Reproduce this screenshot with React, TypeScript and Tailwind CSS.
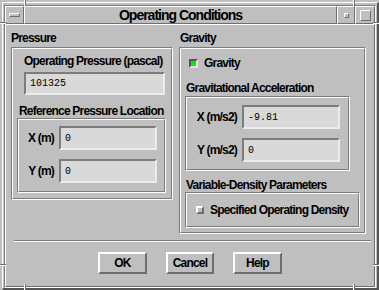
import type { ReactNode } from 'react'

const label = "font-bold text-[12px] leading-[14px] tracking-[-0.8px] text-black"
const mono = "font-['Liberation_Mono','DejaVu_Sans_Mono',monospace] text-[10px] text-black"

function Etched({ className, children }: { className: string; children?: ReactNode }) {
  return (
    <div className={`border border-t-[#7c7c7c] border-l-[#7c7c7c] border-b-white border-r-white ${className}`}>
      <div className="h-full border border-t-white border-l-white border-b-[#7c7c7c] border-r-[#7c7c7c]">
        {children}
      </div>
    </div>
  )
}

function Field({ value, className }: { value: string; className: string }) {
  return (
    <div
      className={`flex items-center pl-[4px] bg-[#d9d9d9] border-2 border-t-[#7c7c7c] border-l-[#7c7c7c] border-b-[#ececec] border-r-[#ececec] ${mono} ${className}`}
    >
      {value}
    </div>
  )
}

function FieldRow({ name, value, labelW }: { name: string; value: string; labelW: string }) {
  return (
    <div className="flex items-center gap-[5px]">
      <span className={`${label} ${labelW} text-right`}>{name}</span>
      <Field value={value} className="w-[98px] h-[24px]" />
    </div>
  )
}

function Button({ text, w }: { text: string; w: string }) {
  return (
    <div
      className={`${w} h-[22px] flex items-center justify-center border-2 border-t-white border-l-white border-b-[#6e6e6e] border-r-[#6e6e6e] ${label}`}
    >
      {text}
    </div>
  )
}

function Notch({ className }: { className: string }) {
  return <div className={`absolute ${className}`} />
}

export default function App() {
  return (
    <div className="relative w-[379px] h-[290px] bg-[#bfbfbf] pl-[2px] pt-[2px] overflow-hidden font-['Liberation_Sans',Arial,sans-serif]">
      <div className="w-[377px] h-[288px] border-t border-l border-white border-r-2 border-b-2 border-r-[#555555] border-b-[#555555] p-[1px]">
        <div className="w-full h-full m-[1px] -ml-0 border border-t-[#7c7c7c] border-l-[#7c7c7c] border-b-white border-r-white flex flex-col">
          {/* title bar */}
          <div className="flex h-[18px] shrink-0">
            <div className="w-[19px] h-full flex items-center justify-center border border-t-white border-l-white border-b-[#6e6e6e] border-r-[#6e6e6e]">
              <div className="w-[11px] h-[4px] border border-t-white border-l-white border-b-[#6e6e6e] border-r-[#6e6e6e]" />
            </div>
            <div className="flex-1 h-full flex items-center justify-center border border-t-white border-l-white border-b-[#6e6e6e] border-r-[#6e6e6e]">
              <span className="font-bold text-[14px] leading-[16px] tracking-[-1px] text-black">Operating Conditions</span>
            </div>
            <div className="w-[18px] h-full flex items-center justify-center border border-t-white border-l-white border-b-[#6e6e6e] border-r-[#6e6e6e]">
              <div className="w-[5px] h-[5px] border border-t-white border-l-white border-b-[#6e6e6e] border-r-[#6e6e6e]" />
            </div>
            <div className="w-[20px] h-full flex items-center justify-center border border-t-white border-l-white border-b-[#6e6e6e] border-r-[#6e6e6e]">
              <div className="w-[11px] h-[11px] border border-t-white border-l-white border-b-[#6e6e6e] border-r-[#6e6e6e]" />
            </div>
          </div>

          {/* dialog body */}
          <div className="flex-1 flex flex-col border border-t-white border-l-white border-b-[#6e6e6e] border-r-[#6e6e6e] pt-[6px] px-[4px]">
            <div className="flex gap-[6px] items-start">
              {/* Pressure */}
              <div className="w-[162px] ml-[1px]">
                <div className={`${label} mb-[2px]`}>Pressure</div>
                <Etched className="w-[162px] h-[153px]">
                  <div className="pt-[5px]">
                    <div className={`${label} ml-[11px]`}>Operating Pressure (pascal)</div>
                    <Field value="101325" className="ml-[11px] mt-[4px] w-[141px] h-[23px]" />
                    <div className={`${label} ml-[6px] mt-[9px]`}>Reference Pressure Location</div>
                    <Etched className="ml-[4px] w-[149px] h-[75px]">
                      <div className="pt-[6px] flex flex-col gap-[9px]">
                        <FieldRow name="X (m)" value="0" labelW="w-[35px]" />
                        <FieldRow name="Y (m)" value="0" labelW="w-[35px]" />
                      </div>
                    </Etched>
                  </div>
                </Etched>
              </div>

              {/* Gravity */}
              <div className="w-[187px]">
                <div className={`${label} mb-[2px] ml-[1px]`}>Gravity</div>
                <Etched className="w-[187px] h-[187px]">
                  <div className="pt-[7px]">
                    <div className="flex items-center h-[14px] ml-[8px] gap-[6px]">
                      <div className="w-[9px] h-[9px] bg-[#00f000] border-2 border-t-[#555555] border-l-[#555555] border-b-[#e8e8e8] border-r-[#e8e8e8]" />
                      <span className={label}>Gravity</span>
                    </div>
                    <div className={`${label} ml-[5px] mt-[11px]`}>Gravitational Acceleration</div>
                    <Etched className="ml-[4px] mt-[1px] w-[165px] h-[75px]">
                      <div className="pt-[7px] flex flex-col gap-[9px]">
                        <FieldRow name="X (m/s2)" value="-9.81" labelW="w-[50px]" />
                        <FieldRow name="Y (m/s2)" value="0" labelW="w-[50px]" />
                      </div>
                    </Etched>
                    <div className={`${label} ml-[5px] mt-[7px]`}>Variable-Density Parameters</div>
                    <Etched className="ml-[4px] w-[175px] h-[36px]">
                      <div className="h-full flex items-center pl-[9px] gap-[6px]">
                        <div className="w-[8px] h-[8px] bg-[#bfbfbf] border-2 border-t-white border-l-white border-b-[#6e6e6e] border-r-[#6e6e6e]" />
                        <span className={label}>Specified Operating Density</span>
                      </div>
                    </Etched>
                  </div>
                </Etched>
              </div>
            </div>

            <div className="ml-[4px] mt-[6px] w-[357px] h-[2px] border-t border-t-[#7c7c7c] border-b border-b-white" />

            <div className="mt-[10px] flex justify-center gap-[19px]">
              <Button text="OK" w="w-[49px]" />
              <Button text="Cancel" w="w-[48px]" />
              <Button text="Help" w="w-[49px]" />
            </div>
          </div>
        </div>
      </div>

      {/* frame resize notches */}
      <Notch className="left-[24px] top-0 w-[2px] h-[6px] border-l border-l-white border-r border-r-[#6e6e6e]" />
      <Notch className="left-[353px] top-0 w-[2px] h-[6px] border-l border-l-white border-r border-r-[#6e6e6e]" />
      <Notch className="left-[24px] top-[284px] w-[2px] h-[6px] border-l border-l-white border-r border-r-[#6e6e6e]" />
      <Notch className="left-[353px] top-[284px] w-[2px] h-[6px] border-l border-l-white border-r border-r-[#6e6e6e]" />
      <Notch className="left-0 top-[22px] w-[6px] h-[2px] border-t border-t-[#6e6e6e] border-b border-b-white" />
      <Notch className="left-[373px] top-[22px] w-[6px] h-[2px] border-t border-t-[#6e6e6e] border-b border-b-white" />
      <Notch className="left-0 top-[264px] w-[6px] h-[2px] border-t border-t-[#6e6e6e] border-b border-b-white" />
      <Notch className="left-[373px] top-[264px] w-[6px] h-[2px] border-t border-t-[#6e6e6e] border-b border-b-white" />
    </div>
  )
}
